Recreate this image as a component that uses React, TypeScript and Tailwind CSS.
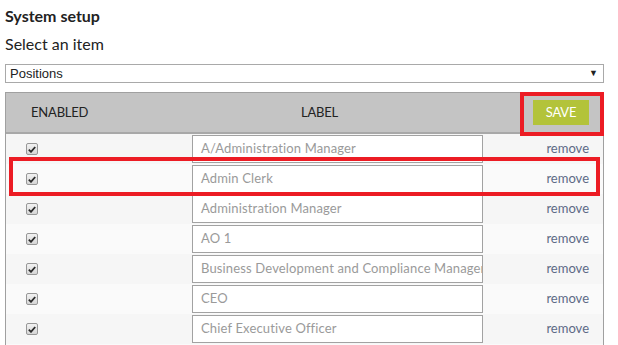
import React from "react";

const rows = [
  "A/Administration Manager",
  "Admin Clerk",
  "Administration Manager",
  "AO 1",
  "Business Development and Compliance Manager",
  "CEO",
  "Chief Executive Officer",
  "Chief Financial Officer",
];

function Check() {
  return (
    <span className="flex h-[12px] w-[12px] items-center justify-center rounded-[2px] border border-[#979797] bg-gradient-to-b from-[#f2f2f2] to-[#d6d6d6]">
      <svg width="8" height="7" viewBox="0 0 8 7">
        <path d="M0.8 3.6 L3 5.8 L7.2 1" fill="none" stroke="#2a2a2a" strokeWidth="1.8" />
      </svg>
    </span>
  );
}

export default function App() {
  return (
    <div className="relative h-[345px] w-[618px] overflow-hidden bg-white font-['Lato',sans-serif] text-[#222]">
      <div className="px-[5px] pt-[6px]">
        <div className="text-[16px] font-bold leading-[20px]">System setup</div>
        <div className="mt-[8px] text-[16px] leading-[20px]">Select an item</div>
        <div className="mt-[10px] flex h-[19px] w-[599px] items-center justify-between border border-[#a9a9a9] pl-[4px] pr-[5px] font-['Liberation_Sans',sans-serif] text-[13px]">
          <span>Positions</span>
          <span className="text-[9px]">▼</span>
        </div>
        <div className="mt-[9px] w-[599px] border-l border-r border-t border-[#a0a0a0]">
          <div className="flex h-[41px] items-center border-b-2 border-[#a8a8a8] bg-[#c4c4c4] text-[13px] tracking-[-0.2px]">
            <div className="w-[186px] pl-[25px]">ENABLED</div>
            <div className="w-[291px] pl-[109px]">LABEL</div>
            <div className="flex flex-1 justify-end pr-[14px]">
              <button className="h-[25px] w-[56px] bg-[#b3c33a] text-[13px] text-white">SAVE</button>
            </div>
          </div>
          {rows.map((r, i) => (
            <div key={r} className={`flex h-[30px] ${i % 2 === 0 ? "bg-[#f6f6f6]" : "bg-[#fafafa]"}`}>
              <div className="flex w-[186px] items-center pl-[20px]">
                <Check />
              </div>
              <div className="my-[1px] flex w-[291px] items-center overflow-hidden whitespace-nowrap border border-[#a2a2a2] bg-white pl-[8px] text-[13px] tracking-[0.15px] text-[#9a9a9a]">
                {r}
              </div>
              <div className="flex flex-1 items-center justify-end pr-[14px] text-[13px] text-[#5d6a86]">remove</div>
            </div>
          ))}
        </div>
      </div>
      <div className="pointer-events-none absolute left-[520px] top-[92px] h-[44px] w-[84px] border-4 border-[#ec1c24]" />
      <div className="pointer-events-none absolute left-[9px] top-[157px] h-[39px] w-[591px] border-4 border-[#ec1c24]" />
    </div>
  );
}
